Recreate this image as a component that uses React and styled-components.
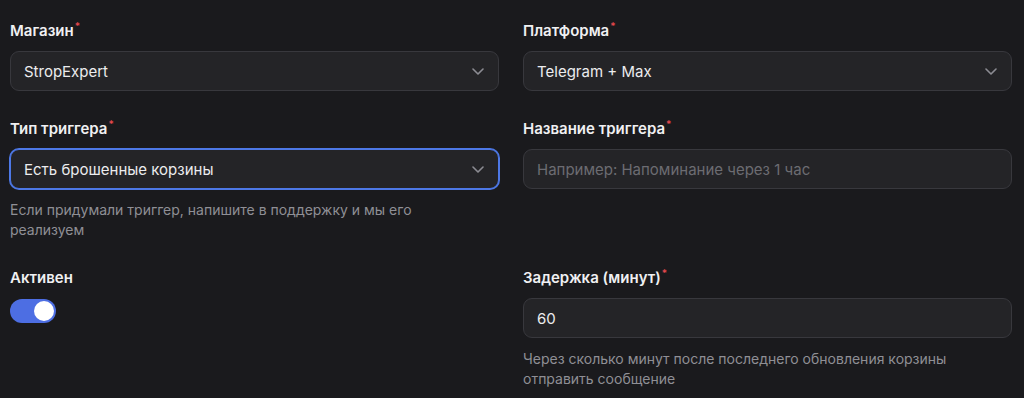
import React from "react";
import styled, { createGlobalStyle } from "styled-components";

const Global = createGlobalStyle`
  html, body {
    margin: 0;
    padding: 0;
    background: #1a1a1d;
  }
  body {
    font-family: Inter, "Noto Sans", "Liberation Sans", sans-serif;
    color: #ededef;
  }
  * {
    box-sizing: border-box;
  }
`;

const Form = styled.div`
  display: grid;
  grid-template-columns: 1fr 1fr;
  align-content: start;
  column-gap: 24px;
  row-gap: 28px;
  padding: 21px 12px 0 10px;
  width: 1024px;
  height: 398px;
  overflow: hidden;
  background: #1a1a1d;
`;

const Field = styled.div`
  display: flex;
  flex-direction: column;
  align-items: flex-start;
`;

const Label = styled.label`
  font-size: 15px;
  line-height: 20px;
  font-weight: 600;
  color: #f0f0f2;
  margin-bottom: 10px;
  display: flex;
  align-items: flex-start;
`;

const Required = styled.span`
  color: #e5484d;
  font-size: 10px;
  line-height: 10px;
  margin-left: 1px;
  font-weight: 600;
`;

const Control = styled.div`
  width: 100%;
  height: 40px;
  display: flex;
  align-items: center;
  padding: 0 14px 0 13px;
  border-radius: 9px;
  background: #242427;
  border: 1px solid ${({ $focused }) => ($focused ? "#4d78e6" : "#38383d")};
  box-shadow: ${({ $focused }) => ($focused ? "0 0 0 1px #4d78e6" : "none")};
  font-size: 15px;
  color: ${({ $muted }) => ($muted ? "#6c6c72" : "#ececee")};
`;

const Value = styled.span`
  flex: 1;
  white-space: nowrap;
`;

const Chevron = () => (
  <svg width="12" height="7" viewBox="0 0 12 7" fill="none">
    <path
      d="M1 1l5 5 5-5"
      stroke="#8c8c93"
      strokeWidth="1.6"
      strokeLinecap="round"
      strokeLinejoin="round"
    />
  </svg>
);

const Hint = styled.p`
  margin: 11px 0 0;
  font-size: 14px;
  line-height: 20px;
  color: #8f8f95;
  max-width: 460px;
`;

const Toggle = styled.div`
  width: 46px;
  height: 24px;
  border-radius: 12px;
  background: ${({ $on }) => ($on ? "#4d6ee3" : "#3a3a40")};
  display: flex;
  align-items: center;
  justify-content: ${({ $on }) => ($on ? "flex-end" : "flex-start")};
  padding: 0 2px;
  margin-top: 1px;
`;

const Knob = styled.span`
  width: 20px;
  height: 20px;
  border-radius: 50%;
  background: #ffffff;
`;

const FieldLabel = ({ children, required }) => (
  <Label>
    {children}
    {required && <Required>*</Required>}
  </Label>
);

export default function App() {
  return (
    <>
      <Global />
      <Form>
        <Field>
          <FieldLabel required>Магазин</FieldLabel>
          <Control>
            <Value>StropExpert</Value>
            <Chevron />
          </Control>
        </Field>
        <Field>
          <FieldLabel required>Платформа</FieldLabel>
          <Control>
            <Value>Telegram + Max</Value>
            <Chevron />
          </Control>
        </Field>

        <Field>
          <FieldLabel required>Тип триггера</FieldLabel>
          <Control $focused>
            <Value>Есть брошенные корзины</Value>
            <Chevron />
          </Control>
          <Hint>
            Если придумали триггер, напишите в поддержку и мы его реализуем
          </Hint>
        </Field>
        <Field>
          <FieldLabel required>Название триггера</FieldLabel>
          <Control $muted>
            <Value>Например: Напоминание через 1 час</Value>
          </Control>
        </Field>

        <Field>
          <FieldLabel>Активен</FieldLabel>
          <Toggle $on>
            <Knob />
          </Toggle>
        </Field>
        <Field>
          <FieldLabel required>Задержка (минут)</FieldLabel>
          <Control>
            <Value>60</Value>
          </Control>
          <Hint>
            Через сколько минут после последнего обновления корзины отправить
            сообщение
          </Hint>
        </Field>
      </Form>
    </>
  );
}
